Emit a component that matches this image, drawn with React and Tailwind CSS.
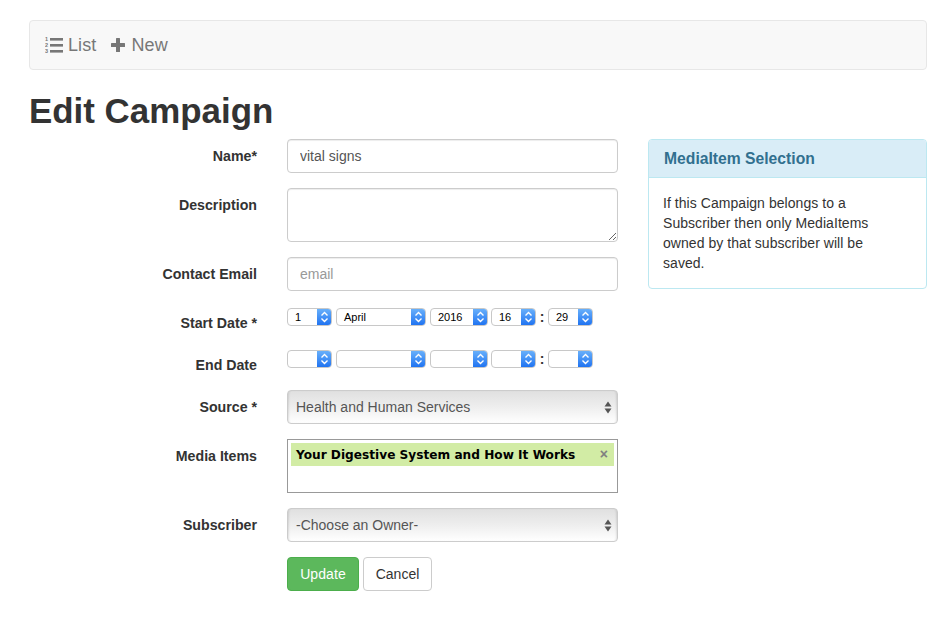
const MacSelect = ({ value, className }) => (
    <div className={`flex h-[18px] overflow-hidden rounded-[4px] border border-[#c8c8c8] bg-white ${className}`}>
        <span className="flex-1 pl-[7px] font-['Liberation_Sans',sans-serif] text-[11px] leading-[16px] text-black">{value}</span>
        <span className="-my-px -mr-px flex w-[15px] items-center justify-center bg-gradient-to-b from-[#6cb3fb] to-[#1a6ff0]">
            <svg width="9" height="12" viewBox="0 0 9 12" fill="none" stroke="white" strokeWidth="1.4">
                <path d="M1.5 4.5 4.5 1.5 7.5 4.5" />
                <path d="M1.5 7.5 4.5 10.5 7.5 7.5" />
            </svg>
        </span>
    </div>
);

const DateRow = ({ day, month, year, hour, minute }) => (
    <div className="flex items-center">
        <MacSelect value={day} className="w-[45px]" />
        <MacSelect value={month} className="ml-[4px] w-[90px]" />
        <MacSelect value={year} className="ml-[4px] w-[58px]" />
        <MacSelect value={hour} className="ml-[3px] w-[45px]" />
        <span className="w-[12px] text-center text-[14px] leading-[16px] font-bold text-[#333]">:</span>
        <MacSelect value={minute} className="w-[45px]" />
    </div>
);

const Row = ({ label, height, labelPad = "pt-[7px]", children }) => (
    <div className="flex" style={{ height }}>
        <div className={`w-[228px] text-right text-[14.2px] leading-[20px] font-bold text-[#333] ${labelPad}`}>{label}</div>
        <div className="ml-[30px] w-[331px]">{children}</div>
    </div>
);

const GraySelect = ({ value }) => (
    <div className="relative">
        <select
            defaultValue={value}
            className="h-[34px] w-full appearance-none rounded-[4px] border border-[#ccc] bg-gradient-to-b from-[#e0e0e0] via-[#eeeeee] to-[#ffffff] pl-[8px] text-[14px] text-[#555] shadow-[inset_2px_0_2px_-1px_rgba(0,0,0,0.1),inset_-2px_0_2px_-1px_rgba(0,0,0,0.1)] outline-none"
        >
            <option>{value}</option>
        </select>
        <svg className="absolute top-[11px] right-[6px]" width="8" height="13" viewBox="0 0 8 13" fill="#555">
            <path d="M4 0.5 7.5 5.5H0.5Z" />
            <path d="M4 12.5 7.5 7.5H0.5Z" />
        </svg>
    </div>
);

const inputClass = "h-[34px] w-full rounded-[4px] border border-[#ccc] bg-white px-[12px] text-[14px] text-[#555] shadow-[inset_0_1px_1px_rgba(0,0,0,0.075)] outline-none placeholder:text-[#999]";

const ListIcon = () => (
    <svg width="18" height="18" viewBox="0 0 18 18" fill="#777">
        <text x="0" y="5" fontSize="5.5" fontWeight="700" fontFamily="Liberation Sans">1</text>
        <text x="0" y="11" fontSize="5.5" fontWeight="700" fontFamily="Liberation Sans">2</text>
        <text x="0" y="17" fontSize="5.5" fontWeight="700" fontFamily="Liberation Sans">3</text>
        <rect x="5" y="2" width="13" height="2.6" />
        <rect x="5" y="8" width="13" height="2.6" />
        <rect x="5" y="14" width="13" height="2.6" />
    </svg>
);

const PlusIcon = () => (
    <svg width="14" height="14" viewBox="0 0 14 14" fill="#777">
        <rect x="0" y="5" width="14" height="4" rx="0.5" />
        <rect x="5" y="0" width="4" height="14" rx="0.5" />
    </svg>
);

const App = () => {
    return (
        <div className="h-[622px] w-[937px] overflow-hidden bg-white pt-[20px] pr-[10px] pl-[29px] font-['Liberation_Sans',sans-serif] text-[#333]">
            <nav className="flex h-[50px] items-center rounded-[4px] border border-[#e7e7e7] bg-[#f8f8f8] pl-[15px] text-[18px] tracking-[0.1px] text-[#777]">
                <a className="flex items-center">
                    <ListIcon />
                    <span className="ml-[5px]">List</span>
                </a>
                <a className="ml-[15px] flex items-center">
                    <span className="-mt-px">
                        <PlusIcon />
                    </span>
                    <span className="ml-[6px]">New</span>
                </a>
            </nav>

            <h1 className="mt-[21px] mb-[8px] text-[34.9px] leading-[40px] font-bold">Edit Campaign</h1>

            <div className="flex">
                <form className="flex w-[589px] flex-col gap-[15px]">
                    <Row label="Name*" height={34}>
                        <input className={inputClass} defaultValue="vital signs" />
                    </Row>
                    <Row label="Description" height={54}>
                        <textarea className={`${inputClass} block h-[54px]`} />
                    </Row>
                    <Row label="Contact Email" height={34}>
                        <input className={inputClass} placeholder="email" />
                    </Row>
                    <Row label="Start Date *" height={28}>
                        <div className="pt-[2px]">
                            <DateRow day="1" month="April" year="2016" hour="16" minute="29" />
                        </div>
                    </Row>
                    <Row label="End Date" height={26} labelPad="pt-[6px]">
                        <div className="pt-px">
                            <DateRow />
                        </div>
                    </Row>
                    <Row label="Source *" height={34}>
                        <GraySelect value="Health and Human Services" />
                    </Row>
                    <Row label="Media Items" height={54}>
                        <div className="h-[54px] border border-[#999] bg-white px-[3px] pt-[3px]">
                            <div className="flex h-[23px] items-center justify-between bg-[#d2eca5] pr-[6px] pl-[5px]">
                                <span className="pt-[2px] font-['DejaVu_Sans',sans-serif] text-[12.15px] font-bold text-black">Your Digestive System and How It Works</span>
                                <span className="text-[14px] font-bold text-[#808080]">×</span>
                            </div>
                        </div>
                    </Row>
                    <Row label="Subscriber" height={34}>
                        <GraySelect value="-Choose an Owner-" />
                    </Row>
                    <Row label="" height={34} labelPad="">
                        <div className="flex gap-[4px]">
                            <button type="button" className="h-[34px] w-[72px] rounded-[4px] border border-[#4cae4c] bg-[#5cb85c] text-[14px] tracking-[0.1px] text-white">Update</button>
                            <button type="button" className="h-[34px] w-[69px] rounded-[4px] border border-[#ccc] bg-white text-[14px] text-[#333]">Cancel</button>
                        </div>
                    </Row>
                </form>

                <aside className="ml-[30px] h-[150px] w-[279px] overflow-hidden rounded-[4px] border border-[#bce8f1]">
                    <div className="flex h-[38px] items-center border-b border-[#bce8f1] bg-[#d9edf7] px-[15px] text-[15.7px] font-bold text-[#31708f]">MediaItem Selection</div>
                    <p className="w-[240px] pt-[15px] pl-[14px] text-[14px] leading-[20px] tracking-[0.05px]">
                        If this Campaign belongs to a Subscriber then only MediaItems owned by that subscriber will be saved.
                    </p>
                </aside>
            </div>
        </div>
    );
};

export default App;
